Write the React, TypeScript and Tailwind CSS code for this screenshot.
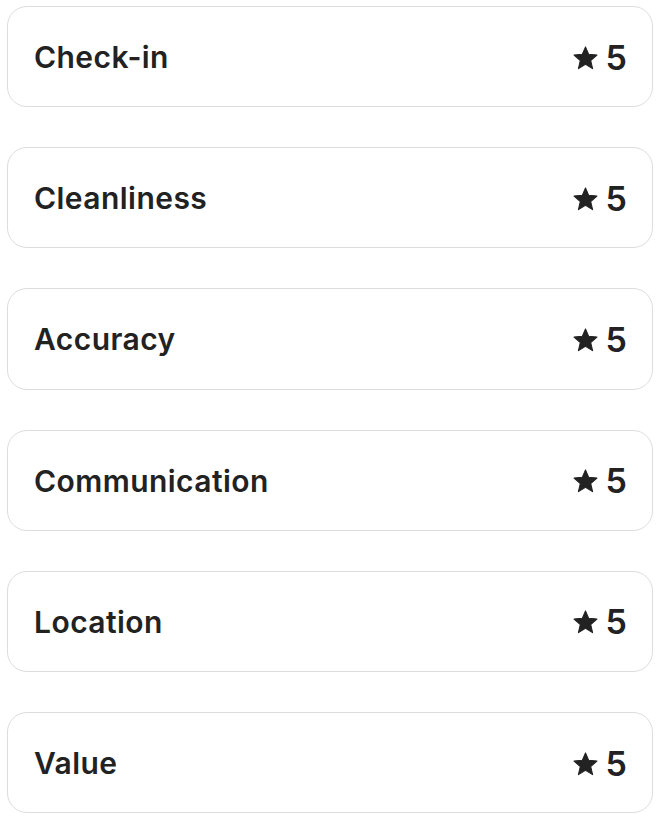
import React from "react";

const items = ["Check-in", "Cleanliness", "Accuracy", "Communication", "Location", "Value"];

function Star() {
  return (
    <svg width="25" height="24" viewBox="0 0 24 23" aria-hidden="true">
      <path
        d="M12 0.8 L15.1 8 L23 8.7 L17 13.9 L18.8 21.7 L12 17.6 L5.2 21.7 L7 13.9 L1 8.7 L8.9 8 Z"
        fill="#222222"
        stroke="#222222"
        strokeWidth="1"
        strokeLinejoin="round"
      />
    </svg>
  );
}

export default function App() {
  return (
    <div
      className="flex w-[660px] flex-col gap-[40px] bg-white px-[7px] pt-[6px] text-[#222222]"
      style={{ fontFamily: "Inter, 'Noto Sans', sans-serif" }}
    >
      {items.map((label) => (
        <div
          key={label}
          className="flex h-[101.2px] items-center justify-between rounded-[20px] border border-[#dddddd] pl-[26px] pr-[25px]"
        >
          <span className="pt-[1px] text-[30px] font-semibold leading-none tracking-[0.45px]">{label}</span>
          <span className="flex items-center gap-[8px] pt-[2px]">
            <Star />
            <span className="text-[34px] font-semibold leading-none">5</span>
          </span>
        </div>
      ))}
    </div>
  );
}
